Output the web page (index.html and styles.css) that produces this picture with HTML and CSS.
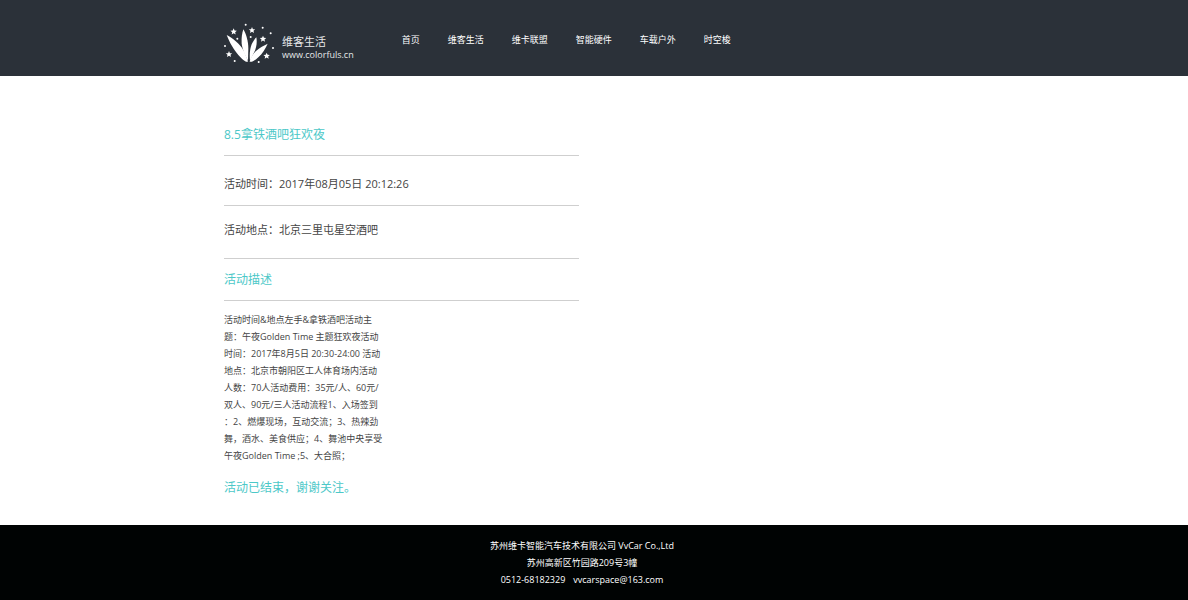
FILE: index.html
```html
<!DOCTYPE html>
<html lang="zh-CN">
<head>
    <meta charset="UTF-8">
    <meta name="viewport" content="width=device-width, initial-scale=1.0">
    <title>维客生活</title>
    <link rel="stylesheet" href="styles.css">
</head>
<body>
    <header class="header">
        <div class="container header__inner">
            <a class="logo" href="#">
                <svg class="logo__mark" viewBox="25 24 150 120" aria-hidden="true">
                    <defs>
                        <path id="star" d="M0 -10 L2.8 -3.6 L9.6 -3 L4.4 1.4 L6 8.2 L0 4.6 L-6 8.2 L-4.4 1.4 L-9.6 -3 L-2.8 -3.6Z"/>
                    </defs>
                    <path d="M33 60 C51 70 73 86 84 107 C89 118 95 130 97 140 L91 140 C76 132 59 110 49 93 C42 82 37 70 33 60Z"/>
                    <path d="M83 43 C91 55 98 79 98 101 L97 137 C89 124 80 104 78 85 C77 69 79 55 83 43Z"/>
                    <path d="M122 67 C125 82 122 101 114 115 L103 137 C101 118 103 100 108 88 C112 79 117 72 122 67Z"/>
                    <path d="M156 86 C150 100 140 116 128 127 C121 133 114 139 109 140 L102 140 C104 129 112 116 121 108 C132 98 145 91 156 86Z"/>
                    <use href="#star" x="54" y="50"/>
                    <use href="#star" x="109" y="46"/>
                    <use href="#star" x="142" y="72"/>
                    <use href="#star" x="40" y="118"/>
                    <use href="#star" x="153" y="123"/>
                    <circle cx="90" cy="29" r="3"/>
                    <circle cx="141" cy="38" r="3"/>
                    <circle cx="165" cy="55" r="3"/>
                    <circle cx="65" cy="71" r="3"/>
                    <circle cx="105" cy="66" r="3"/>
                    <circle cx="28" cy="93" r="3"/>
                    <circle cx="172" cy="99" r="3"/>
                    <circle cx="57" cy="138" r="3"/>
                    <circle cx="129" cy="141" r="3"/>
                </svg>
                <span class="logo__text">
                    <span class="logo__name">维客生活</span>
                    <span class="logo__url">www.colorfuls.cn</span>
                </span>
            </a>
            <nav class="nav">
                <a href="#">首页</a>
                <a href="#">维客生活</a>
                <a href="#">维卡联盟</a>
                <a href="#">智能硬件</a>
                <a href="#">车载户外</a>
                <a href="#">时空梭</a>
            </nav>
        </div>
    </header>

    <main class="container main">
        <article class="event">
            <h1 class="event__title">8.5拿铁酒吧狂欢夜</h1>
            <p class="event__time">活动时间：2017年08月05日 20:12:26</p>
            <p class="event__place">活动地点：北京三里屯星空酒吧</p>
            <h2 class="event__subtitle">活动描述</h2>
            <p class="event__desc">
                活动时间&amp;地点左手&amp;拿铁酒吧活动主<br>
                题：午夜Golden Time 主题狂欢夜活动<br>
                时间：2017年8月5日 20:30-24:00 活动<br>
                地点：北京市朝阳区工人体育场内活动<br>
                人数：70人活动费用：35元/人、60元/<br>
                双人、90元/三人活动流程1、入场签到<br>
                ：2、燃爆现场，互动交流；3、热辣劲<br>
                舞，酒水、美食供应；4、舞池中央享受<br>
                午夜Golden Time ;5、大合照；
            </p>
            <p class="event__end">活动已结束，谢谢关注。</p>
        </article>
    </main>

    <footer class="footer">
        <div class="container footer__inner">
            <p>苏州维卡智能汽车技术有限公司 VvCar Co.,Ltd</p>
            <p>苏州高新区竹园路209号3幢</p>
            <p class="footer__contact"><span>0512-68182329</span><span>vvcarspace@163.com</span></p>
        </div>
    </footer>
</body>
</html>
```
FILE: styles.css
```css
/* Reset */
* {
    margin: 0;
    padding: 0;
    box-sizing: border-box;
}
body {
    font-family: "Open Sans", "Noto Sans CJK SC", sans-serif;
    font-size: 9px;
    line-height: 17px;
    display: flex;
    flex-direction: column;
    min-height: 100vh;
    background-color: #ffffff;
    color: #444444;
}
a {
    color: inherit;
    text-decoration: none;
}
.container {
    width: 100%;
    max-width: 740px;
    margin: 0 auto;
}

/* Header */
.header {
    background-color: #2b3139;
    color: #ffffff;
}
.header__inner {
    display: flex;
    align-items: flex-start;
    gap: 48px;
    padding: 23px 0 13px;
}
.logo {
    display: flex;
    align-items: flex-end;
    gap: 8px;
}
.logo__mark {
    width: 50px;
    height: 40px;
    fill: #ffffff;
}
.logo__text {
    display: flex;
    flex-direction: column;
    padding-bottom: 2px;
    line-height: 13px;
    color: #e6e8ea;
}
.logo__name {
    font-size: 11px;
}
.nav {
    display: flex;
    gap: 28px;
    padding-top: 8px;
}
.nav a:hover {
    color: #4cc8c8;
}

/* Event */
.main {
    flex: 1;
    padding: 50px 0 28px;
}
.event {
    width: 48%;
    min-width: 240px;
    line-height: 18px;
}
.event__title,
.event__subtitle,
.event__end {
    font-size: 12px;
    font-weight: 400;
    color: #4cc8c8;
}
.event__title,
.event__time,
.event__place,
.event__subtitle {
    border-bottom: 1px solid #cfcfcf;
}
.event__time,
.event__place {
    font-size: 11px;
}
.event__title {
    padding-bottom: 11px;
}
.event__time {
    padding: 19px 0 12px;
}
.event__place {
    padding: 15px 0 19px;
}
.event__subtitle {
    padding: 12px 0 11px;
}
.event__desc {
    padding: 10px 0 15px;
    line-height: 17px;
}

/* Footer */
.footer {
    background-color: #000303;
    color: #ffffff;
}
.footer__inner {
    padding: 12px 24px 12px 0;
    text-align: center;
}
.footer__contact {
    display: flex;
    justify-content: center;
    gap: 8px;
}
```
